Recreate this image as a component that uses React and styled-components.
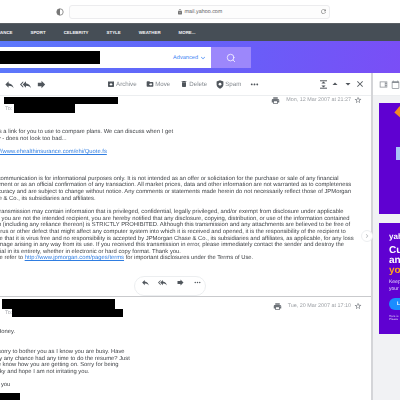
import React from 'react';
import styled, {createGlobalStyle} from 'styled-components';
import {
	MdReply, MdReplyAll, MdForward, MdArchive, MdDriveFileMove, MdDelete,
	MdMoreHoriz, MdPrint, MdStarBorder, MdClose, MdLock, MdRefresh,
	MdKeyboardArrowDown, MdArrowDropUp, MdArrowDropDown, MdChevronRight,
	MdOutlineViewSidebar, MdCalendarToday
} from 'react-icons/md';
import {Search} from 'lucide-react';

const Global = createGlobalStyle`
	html, body { margin: 0; padding: 0; background: #fff; }
	body {
		font-family: "Liberation Sans", Arial, sans-serif;
		text-rendering: geometricPrecision;
	}
`;

const Page = styled.div`
	width: 400px;
	height: 400px;
	overflow: hidden;
	display: flex;
	flex-direction: column;
	filter: blur(0.4px);
`;

// Browser chrome
const BrowserBar = styled.div`
	height: 23px;
	flex: none;
	background: #fff;
	display: flex;
	align-items: center;
	padding-left: 56px;
	gap: 5px;
	border-bottom: 1px solid #5a5f64;
`;

const UrlField = styled.div`
	width: 259px;
	height: 12px;
	border: 1px solid #ececee;
	border-radius: 3px;
	background: #fdfdfd;
	position: relative;
	display: flex;
	align-items: center;
	justify-content: center;
	gap: 2px;
	font-size: 5.4px;
	color: #666;
	svg { color: #777; }
`;

const Reload = styled.span`
	position: absolute;
	right: 2px;
	top: 2px;
	display: flex;
	color: #999;
`;

// Yahoo nav
const Nav = styled.div`
	height: 17px;
	flex: none;
	background: #464e56;
	display: flex;
	align-items: center;
	margin-left: -7px;
	gap: 18px;
	color: #f2f3f5;
	font-size: 4.4px;
	font-weight: 700;
`;

const SearchBand = styled.div`
	height: 32px;
	flex: none;
	background: linear-gradient(100deg, #5c78fb 0%, #6264f9 45%, #7a4ef6 100%);
	display: flex;
	align-items: center;
	padding-top: 1px;
	box-sizing: border-box;
`;

const SearchField = styled.div`
	width: 211px;
	height: 21px;
	background: #fff;
	display: flex;
	align-items: center;
	justify-content: space-between;
	padding-right: 4px;
	box-sizing: border-box;
`;

const Redacted = styled.div`
	background: #000;
	flex: none;
	width: ${p => p.$w}px;
	height: ${p => p.$h}px;
	margin-left: ${p => p.$left || 0}px;
`;

const Advanced = styled.span`
	color: #3f86f4;
	font-size: 5.6px;
	display: flex;
	align-items: center;
	gap: 1px;
`;

const SearchButton = styled.div`
	width: 40px;
	height: 21px;
	background: #9c87fb;
	color: #fff;
	display: flex;
	align-items: center;
	justify-content: center;
`;

// Main area
const Main = styled.div`
	flex: 1;
	display: flex;
	min-height: 0;
`;

const MailColumn = styled.div`
	width: 373px;
	flex: none;
	display: flex;
	flex-direction: column;
	border-right: 2px solid #d4d5d8;
	box-sizing: border-box;
`;

const Toolbar = styled.div`
	height: 23px;
	flex: none;
	display: flex;
	align-items: center;
	border-bottom: 1px solid #eceef0;
	box-sizing: border-box;
	color: #50565c;
`;

const ReplyGroup = styled.div`
	display: flex;
	align-items: center;
	gap: 5px;
	padding-left: 4px;
	width: 106.5px;
	flex: none;
	box-sizing: border-box;
`;

const ToolItem = styled.div`
	display: flex;
	align-items: center;
	gap: 1.5px;
	margin-right: ${p => p.$gap}px;
	font-size: 6.2px;
	color: #858a90;
	svg { color: #50565c; }
`;

const PagerGroup = styled.div`
	margin-left: auto;
	display: flex;
	align-items: center;
	gap: 1px;
	padding-right: 6px;
`;

const Message = styled.div`
	position: relative;
	flex: none;
	height: ${p => p.$height}px;
	border-bottom: ${p => (p.$last ? 'none' : '1px solid #c9cacd')};
	box-sizing: border-box;
	overflow: hidden;
	display: flex;
	flex-direction: column;
`;

const MetaRow = styled.div`
	display: flex;
	align-items: center;
	justify-content: flex-end;
	gap: 3px;
	height: 10px;
	position: absolute;
	top: ${p => p.$top}px;
	right: 9px;
	font-size: 5.4px;
	color: #9a9ea3;
	svg { color: #6d7278; }
	svg:first-child { margin-right: 3px; }
`;

const SenderRow = styled.div`
	display: flex;
	flex: none;
	margin-top: ${p => p.$top}px;
`;

const ToRow = styled.div`
	display: flex;
	align-items: center;
	flex: none;
	font-size: 5.4px;
	color: #a5a8ad;
	padding-left: 5px;
`;

const ToLabel = styled.span`
	width: ${p => p.$w}px;
	flex: none;
`;

const Body = styled.div`
	margin-top: ${p => p.$top}px;
	margin-left: -15px;
	font-size: 5.85px;
	line-height: 6.67px;
	color: #3c3f43;
	white-space: nowrap;
`;

const Line = styled.div`
	height: 6.67px;
	margin-left: ${p => p.$shift || 0}px;
`;

const Link = styled.span`
	color: #2f7de1;
	text-decoration: underline;
`;

const FloatBar = styled.div`
	position: absolute;
	left: 134px;
	bottom: 0;
	width: 72px;
	height: 20px;
	border: 1px solid #eceef0;
	border-radius: 10px;
	background: #fff;
	display: flex;
	align-items: center;
	justify-content: space-between;
	padding: 0 3px 7px 6px;
	box-sizing: border-box;
	color: #50565c;
`;

const NextButton = styled.div`
	position: absolute;
	left: 361px;
	top: 230px;
	width: 12px;
	height: 12px;
	border-radius: 50%;
	background: #fff;
	border: 1px solid #eceef0;
	box-sizing: border-box;
	display: flex;
	align-items: center;
	justify-content: center;
	color: #b5b8bc;
`;

// Right rail
const Rail = styled.div`
	flex: 1;
	background: #f1f2f4;
	display: flex;
	flex-direction: column;
`;

const RailTools = styled.div`
	height: 23px;
	flex: none;
	background: #fff;
	border-bottom: 1px solid #eceef0;
	box-sizing: border-box;
	display: flex;
	align-items: center;
	gap: 3px;
	padding-left: 6px;
	color: #8b9096;
`;

const Ad = styled.div`
	position: relative;
	background: #5f01d1;
	margin-left: 6px;
	margin-top: ${p => p.$top}px;
	height: ${p => p.$h}px;
	flex: none;
	overflow: hidden;
	padding-left: 10px;
	color: #fff;
`;

const AdShape = styled.div`
	position: absolute;
	left: ${p => p.$x}px;
	top: ${p => p.$y}px;
	width: ${p => p.$w}px;
	height: ${p => p.$h}px;
	background: ${p => p.$c};
	transform: ${p => p.$t || 'none'};
`;

const AdLogo = styled.div`
	font-weight: 700;
	font-size: 8px;
	margin-top: 9px;
	white-space: nowrap;
`;

const AdHeadline = styled.div`
	font-weight: 700;
	font-size: 10px;
	line-height: 10px;
	margin-top: 5px;
	white-space: nowrap;
	color: ${p => p.$c || '#fff'};
	& + & { margin-top: 0; }
`;

const AdCopy = styled.div`
	font-size: 5px;
	line-height: 6.5px;
	margin-top: 3px;
	white-space: nowrap;
	color: #e7dcfb;
`;

const AdCta = styled.div`
	width: 40px;
	height: 12px;
	border-radius: 6px;
	background: #1a8dff;
	font-size: 5px;
	line-height: 12px;
	padding-left: 8px;
	margin-top: 6px;
	font-weight: 700;
`;

const AdSmall = styled.div`
	font-size: 3px;
	line-height: 3.4px;
	margin-top: 5px;
	white-space: nowrap;
	color: #d9ccf5;
`;

const ShieldHalf = () => (
	<svg width="8" height="8" viewBox="0 0 8 8">
		<circle cx="4" cy="4" r="3.2" fill="#fff" stroke="#777" strokeWidth="0.8" />
		<path d="M4 .8a3.2 3.2 0 0 0 0 6.4z" fill="#777" />
	</svg>
);

const SpamIcon = () => (
	<svg width="8" height="9" viewBox="0 0 8 9">
		<path d="M4 .3 7.4 1.5V4.5C7.4 6.6 5.9 8 4 8.7 2.1 8 .6 6.6.6 4.5V1.5z" fill="#50565c" />
		<circle cx="4" cy="4.2" r="1.4" fill="#fff" />
	</svg>
);

const ExpandIcon = () => (
	<svg width="9" height="9" viewBox="0 0 9 9">
		<path d="M1 .8h7M1 8.2h7" stroke="#50565c" strokeWidth="1" />
		<path d="M4.5 1.5 2.4 3.6h4.2zM4.5 7.5 2.4 5.4h4.2z" fill="#50565c" />
	</svg>
);

const firstLines = [
	"Here's a link for you to use to compare plans. We can discuss when I get",
	'Today - does not look too bad...',
	'',
	<Link>https://www.ehealthinsurance.com/ehi/Quote.fs</Link>,
	'', '', '',
	'This communication is for informational purposes only. It is not intended as an offer or solicitation for the purchase or sale of any financial',
	'instrument or as an official confirmation of any transaction. All market prices, data and other information are not warranted as to completeness',
	'or accuracy and are subject to change without notice. Any comments or statements made herein do not necessarily reflect those of JPMorgan',
	'Chase & Co., its subsidiaries and affiliates.',
	'',
	'This transmission may contain information that is privileged, confidential, legally privileged, and/or exempt from disclosure under applicable',
	'law. If you are not the intended recipient, you are hereby notified that any disclosure, copying, distribution, or use of the information contained',
	'herein (including any reliance thereon) is STRICTLY PROHIBITED. Although this transmission and any attachments are believed to be free of',
	'any virus or other defect that might affect any computer system into which it is received and opened, it is the responsibility of the recipient to',
	'ensure that it is virus free and no responsibility is accepted by JPMorgan Chase & Co., its subsidiaries and affiliates, as applicable, for any loss',
	'or damage arising in any way from its use. If you received this transmission in error, please immediately contact the sender and destroy the',
	'material in its entirety, whether in electronic or hard copy format. Thank you.',
	<>Please refer to <Link>http://www.jpmorgan.com/pages/terms</Link> for important disclosures under the Terms of Use.</>
];

const secondLines = [
	{text: 'Hey Honey.'},
	{text: ''},
	{text: ''},
	{text: 'I am sorry to bother you as I know you are busy. Have'},
	{text: 'you by any chance had any time to do the resume? Just'},
	{text: 'let me know how you are getting on. Sorry for being'},
	{text: 'cheeky and hope I am not irritating you.', shift: 2},
	{text: ''},
	{text: 'thank you'}
];

const navItems = ['FINANCE', 'SPORT', 'CELEBRITY', 'STYLE', 'WEATHER', 'MORE...'];

const App = () => (
	<Page>
		<Global />
		<BrowserBar>
			<ShieldHalf />
			<UrlField>
				<MdLock size={6} />
				mail.yahoo.com
				<Reload><MdRefresh size={7} /></Reload>
			</UrlField>
		</BrowserBar>
		<Nav>
			{navItems.map(item => <span key={item}>{item}</span>)}
		</Nav>
		<SearchBand>
			<SearchField>
				<Redacted $w={100} $h={13} />
				<Advanced>Advanced <MdKeyboardArrowDown size={8} /></Advanced>
			</SearchField>
			<SearchButton><Search size={10} strokeWidth={1.8} /></SearchButton>
		</SearchBand>
		<Main>
			<MailColumn>
				<Toolbar>
					<ReplyGroup>
						<MdReply size={11} />
						<MdReplyAll size={11} />
						<MdForward size={11} />
					</ReplyGroup>
					<ToolItem $gap={9}><MdArchive size={8} />Archive</ToolItem>
					<ToolItem $gap={9.5}><MdDriveFileMove size={8} />Move</ToolItem>
					<ToolItem $gap={8.5}><MdDelete size={8} />Delete</ToolItem>
					<ToolItem $gap={8}><SpamIcon />Spam</ToolItem>
					<MdMoreHoriz size={11} />
					<PagerGroup>
						<ExpandIcon />
						<MdArrowDropUp size={12} />
						<MdArrowDropDown size={12} />
						<MdClose size={10} />
					</PagerGroup>
				</Toolbar>
				<Message $height={201}>
					<MetaRow $top={-1}>
						<MdPrint size={9} />
						<span>Mon, 12 Mar 2007 at 21:27</span>
						<MdStarBorder size={8} />
					</MetaRow>
					<SenderRow $top={1}><Redacted $w={114} $h={7} $left={4} /></SenderRow>
					<ToRow>
						<ToLabel $w={9}>To:</ToLabel>
						<Redacted $w={61} $h={9} />
					</ToRow>
					<Body $top={16}>
						{firstLines.map((line, index) => <Line key={index}>{line}</Line>)}
					</Body>
					<FloatBar>
						<MdReply size={9} />
						<MdReplyAll size={9} />
						<MdForward size={9} />
						<MdMoreHoriz size={9} />
					</FloatBar>
				</Message>
				<Message $height={104} $last>
					<MetaRow $top={4}>
						<MdPrint size={9} />
						<span>Tue, 20 Mar 2007 at 17:10</span>
						<MdStarBorder size={8} />
					</MetaRow>
					<SenderRow $top={2}><Redacted $w={113} $h={10} $left={2} /></SenderRow>
					<ToRow>
						<ToLabel $w={7}>To:</ToLabel>
						<Redacted $w={111} $h={8} />
					</ToRow>
					<Body $top={12}>
						{secondLines.map((line, index) => <Line key={index} $shift={line.shift}>{line.text}</Line>)}
					</Body>
					<SenderRow $top={4}><Redacted $w={20} $h={10} /></SenderRow>
				</Message>
			</MailColumn>
			<Rail>
				<RailTools>
					<MdOutlineViewSidebar size={9} />
					<MdCalendarToday size={9} />
				</RailTools>
				<Ad $top={7} $h={111}>
					<AdShape $x={17} $y={5} $w={8} $h={8} $c="#f08a24" $t="rotate(40deg)" />
					<AdShape $x={17} $y={44} $w={6} $h={13} $c="#a9c3f7" />
				</Ad>
				<Ad $top={9} $h={111}>
					<AdLogo>yahoo!</AdLogo>
					<AdHeadline>Cut</AdHeadline>
					<AdHeadline>and</AdHeadline>
					<AdHeadline $c="#ffa41c">your</AdHeadline>
					<AdCopy>Keep<br />your</AdCopy>
					<AdCta>Learn</AdCta>
					<AdSmall>Here is<br />Please</AdSmall>
				</Ad>
			</Rail>
			<NextButton><MdChevronRight size={8} /></NextButton>
		</Main>
	</Page>
);

export default App;
